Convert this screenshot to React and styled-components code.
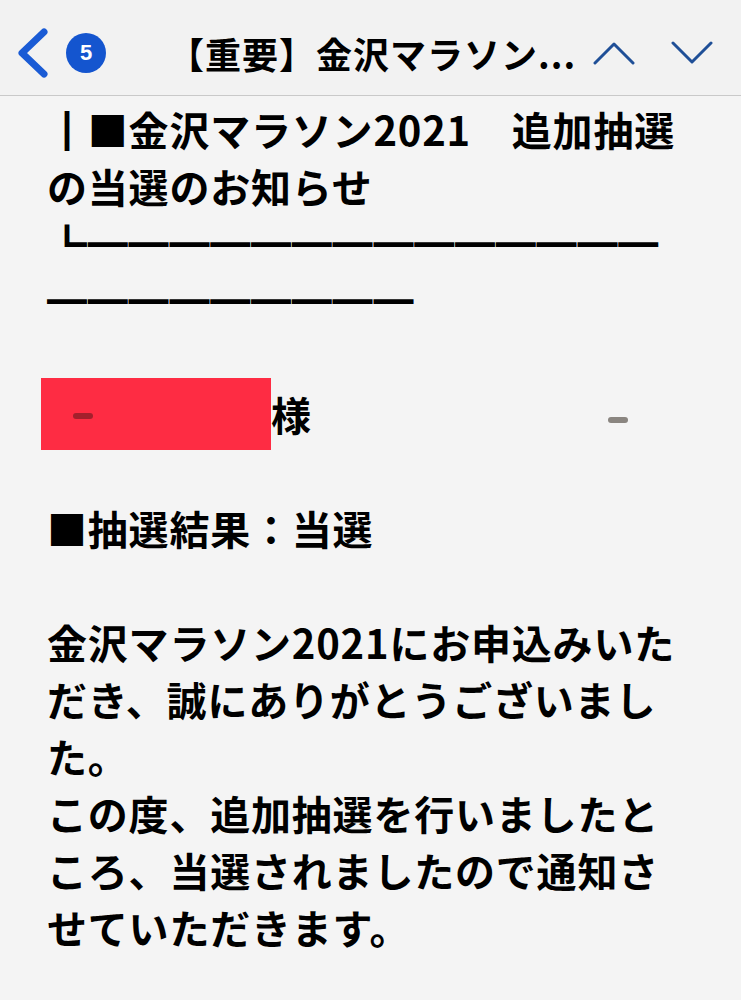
import React from 'react';
import styled, { createGlobalStyle } from 'styled-components';

// Базовые стили страницы
const GlobalStyle = createGlobalStyle`
  html, body {
    margin: 0;
    padding: 0;
    background: #f4f4f4;
  }
  body {
    font-family: "Noto Sans CJK JP", "Noto Sans", sans-serif;
    color: #000;
  }
`;

const Screen = styled.div`
  width: 741px;
  min-height: 1000px;
  background: #f4f4f4;
  overflow: hidden;
`;

// Верхняя панель письма
const Header = styled.header`
  height: 96px;
  display: flex;
  align-items: center;
  padding: 10px 28px 0 12px;
  border-bottom: 1px solid #c9c9c9;
  background: #f2f2f2;
  box-sizing: border-box;
`;

const BackButton = styled.button`
  display: flex;
  align-items: center;
  gap: 16px;
  background: none;
  border: 0;
  padding: 0;
  cursor: pointer;
`;

const Badge = styled.span`
  width: 40px;
  height: 40px;
  border-radius: 50%;
  background: #1455cf;
  color: #fff;
  display: flex;
  align-items: center;
  justify-content: center;
  font-family: "Liberation Sans", Arial, sans-serif;
  font-weight: 700;
  font-size: 22px;
`;

const Title = styled.h1`
  margin: 0 0 0 62px;
  font-size: 36px;
  font-weight: 700;
  letter-spacing: 1px;
  white-space: nowrap;
  color: #000;
`;

const NavGroup = styled.div`
  margin-left: auto;
  display: flex;
  align-items: center;
  gap: 36px;
`;

const NavButton = styled.button`
  background: none;
  border: 0;
  padding: 0;
  display: flex;
  cursor: pointer;
`;

// Тело письма
const Body = styled.main`
  padding: 5px 54px 0 47px;
  font-size: 40px;
  font-weight: 700;
  line-height: 57px;
  letter-spacing: 0.8px;
`;

const Para = styled.p`
  margin: 0 0 ${p => (p.$gap ? '57px' : '0')};
  white-space: ${p => (p.$nowrap ? 'nowrap' : 'normal')};
`;

// Красная плашка, закрывающая имя
const Redact = styled.span`
  display: inline-block;
  position: relative;
  width: 230px;
  height: 57px;
  margin-left: -6px;
  vertical-align: top;

  &::before {
    content: '';
    position: absolute;
    left: 0;
    right: 0;
    top: -8px;
    bottom: -7px;
    background: #fe2c43;
  }
`;

const Smudge = styled.span`
  position: absolute;
  left: ${p => p.$left}px;
  top: ${p => p.$top}px;
  width: 20px;
  height: 6px;
  border-radius: 3px;
  background: ${p => p.$color};
`;

const Stray = styled.span`
  display: inline-block;
  width: 20px;
  height: 6px;
  border-radius: 3px;
  margin-left: 296px;
  vertical-align: middle;
  background: #8a8580;
`;

const Chevron = ({ d, w, h, sw, color }) => (
  <svg width={w} height={h} viewBox={`0 0 ${w} ${h}`} fill="none">
    <path d={d} stroke={color} strokeWidth={sw} strokeLinecap="round" strokeLinejoin="round" />
  </svg>
);

const App = () => {
  return (
    <Screen lang="ja">
      <GlobalStyle />
      <Header>
        <BackButton>
          <Chevron w={38} h={50} sw={7} color="#1a5bd5" d="M32 4 L10 25 L32 46" />
          <Badge>5</Badge>
        </BackButton>
        <Title>【重要】金沢マラソン...</Title>
        <NavGroup>
          <NavButton>
            <Chevron w={42} h={24} sw={3} color="#1f4f97" d="M2 22 L21 3 L40 22" />
          </NavButton>
          <NavButton>
            <Chevron w={42} h={24} sw={3} color="#1f4f97" d="M2 2 L21 21 L40 2" />
          </NavButton>
        </NavGroup>
      </Header>

      <Body>
        <Para>┃■金沢マラソン2021　追加抽選の当選のお知らせ</Para>
        <Para $nowrap>┗━━━━━━━━━━━━━━</Para>
        <Para $nowrap $gap>━━━━━━━━━</Para>

        <Para $nowrap $gap>
          <Redact>
            <Smudge $left={32} $top={27} $color="#a3202c" />
          </Redact>
          様<Stray />
        </Para>

        <Para $gap>■抽選結果：当選</Para>

        <Para>
          金沢マラソン2021にお申込みいただき、誠にありがとうございました。
          <br />
          この度、追加抽選を行いましたところ、当選されましたので通知させていただきます。
        </Para>
      </Body>
    </Screen>
  );
};

export default App;
